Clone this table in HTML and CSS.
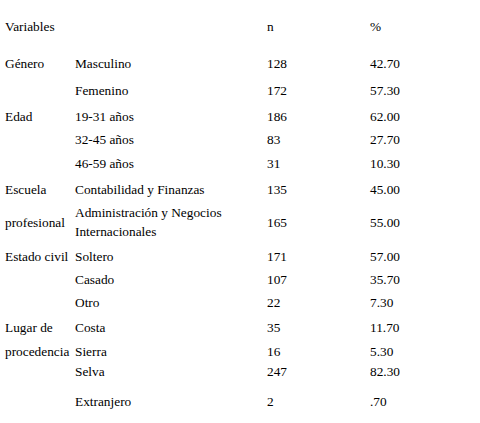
FILE: index.html
```html
<!DOCTYPE html>
<html lang="es">
<head>
<meta charset="utf-8">
<title>Variables</title>
<link rel="stylesheet" href="styles.css">
</head>
<body>
<div class="table">
  <div class="row head"><span>Variables</span><span></span><span>n</span><span>%</span></div>
  <div class="row h26"><span>Género</span><span>Masculino</span><span>128</span><span>42.70</span></div>
  <div class="row h28"><span></span><span>Femenino</span><span>172</span><span>57.30</span></div>
  <div class="row h24"><span>Edad</span><span>19-31 años</span><span>186</span><span>62.00</span></div>
  <div class="row h22"><span></span><span>32-45 años</span><span>83</span><span>27.70</span></div>
  <div class="row h26"><span></span><span>46-59 años</span><span>31</span><span>10.30</span></div>
  <div class="row h26"><span>Escuela</span><span>Contabilidad y Finanzas</span><span>135</span><span>45.00</span></div>
  <div class="row h40"><span>profesional</span><span class="wrap">Administración y Negocios Internacionales</span><span>165</span><span>55.00</span></div>
  <div class="row h28"><span>Estado civil</span><span>Soltero</span><span>171</span><span>57.00</span></div>
  <div class="row h18"><span></span><span>Casado</span><span>107</span><span>35.70</span></div>
  <div class="row h28"><span></span><span>Otro</span><span>22</span><span>7.30</span></div>
  <div class="row h22"><span>Lugar de</span><span>Costa</span><span>35</span><span>11.70</span></div>
  <div class="row h26"><span>procedencia</span><span>Sierra</span><span>16</span><span>5.30</span></div>
  <div class="row h14"><span></span><span>Selva</span><span>247</span><span>82.30</span></div>
  <div class="row h46"><span></span><span>Extranjero</span><span>2</span><span>.70</span></div>
</div>
</body>
</html>
```

FILE: styles.css
```css
html, body {
  margin: 0;
  padding: 0;
  background: #ffffff;
}
body {
  font-family: "Liberation Serif", "Times New Roman", serif;
  font-size: 13.33px;
  color: #000000;
}
.table {
  padding: 14px 0 0 5px;
}
.row {
  display: grid;
  grid-template-columns: 70px 192px 103px 1fr;
  align-items: center;
  line-height: 15px;
  white-space: nowrap;
}
.row.head { height: 24px; margin-bottom: 12px; }
.wrap { white-space: normal; line-height: 19px; padding-right: 8px; }
.h14 { height: 14px; }
.h18 { height: 18px; }
.h22 { height: 22px; }
.h24 { height: 24px; }
.h26 { height: 26px; }
.h28 { height: 28px; }
.h40 { height: 40px; }
.h46 { height: 46px; }
```
